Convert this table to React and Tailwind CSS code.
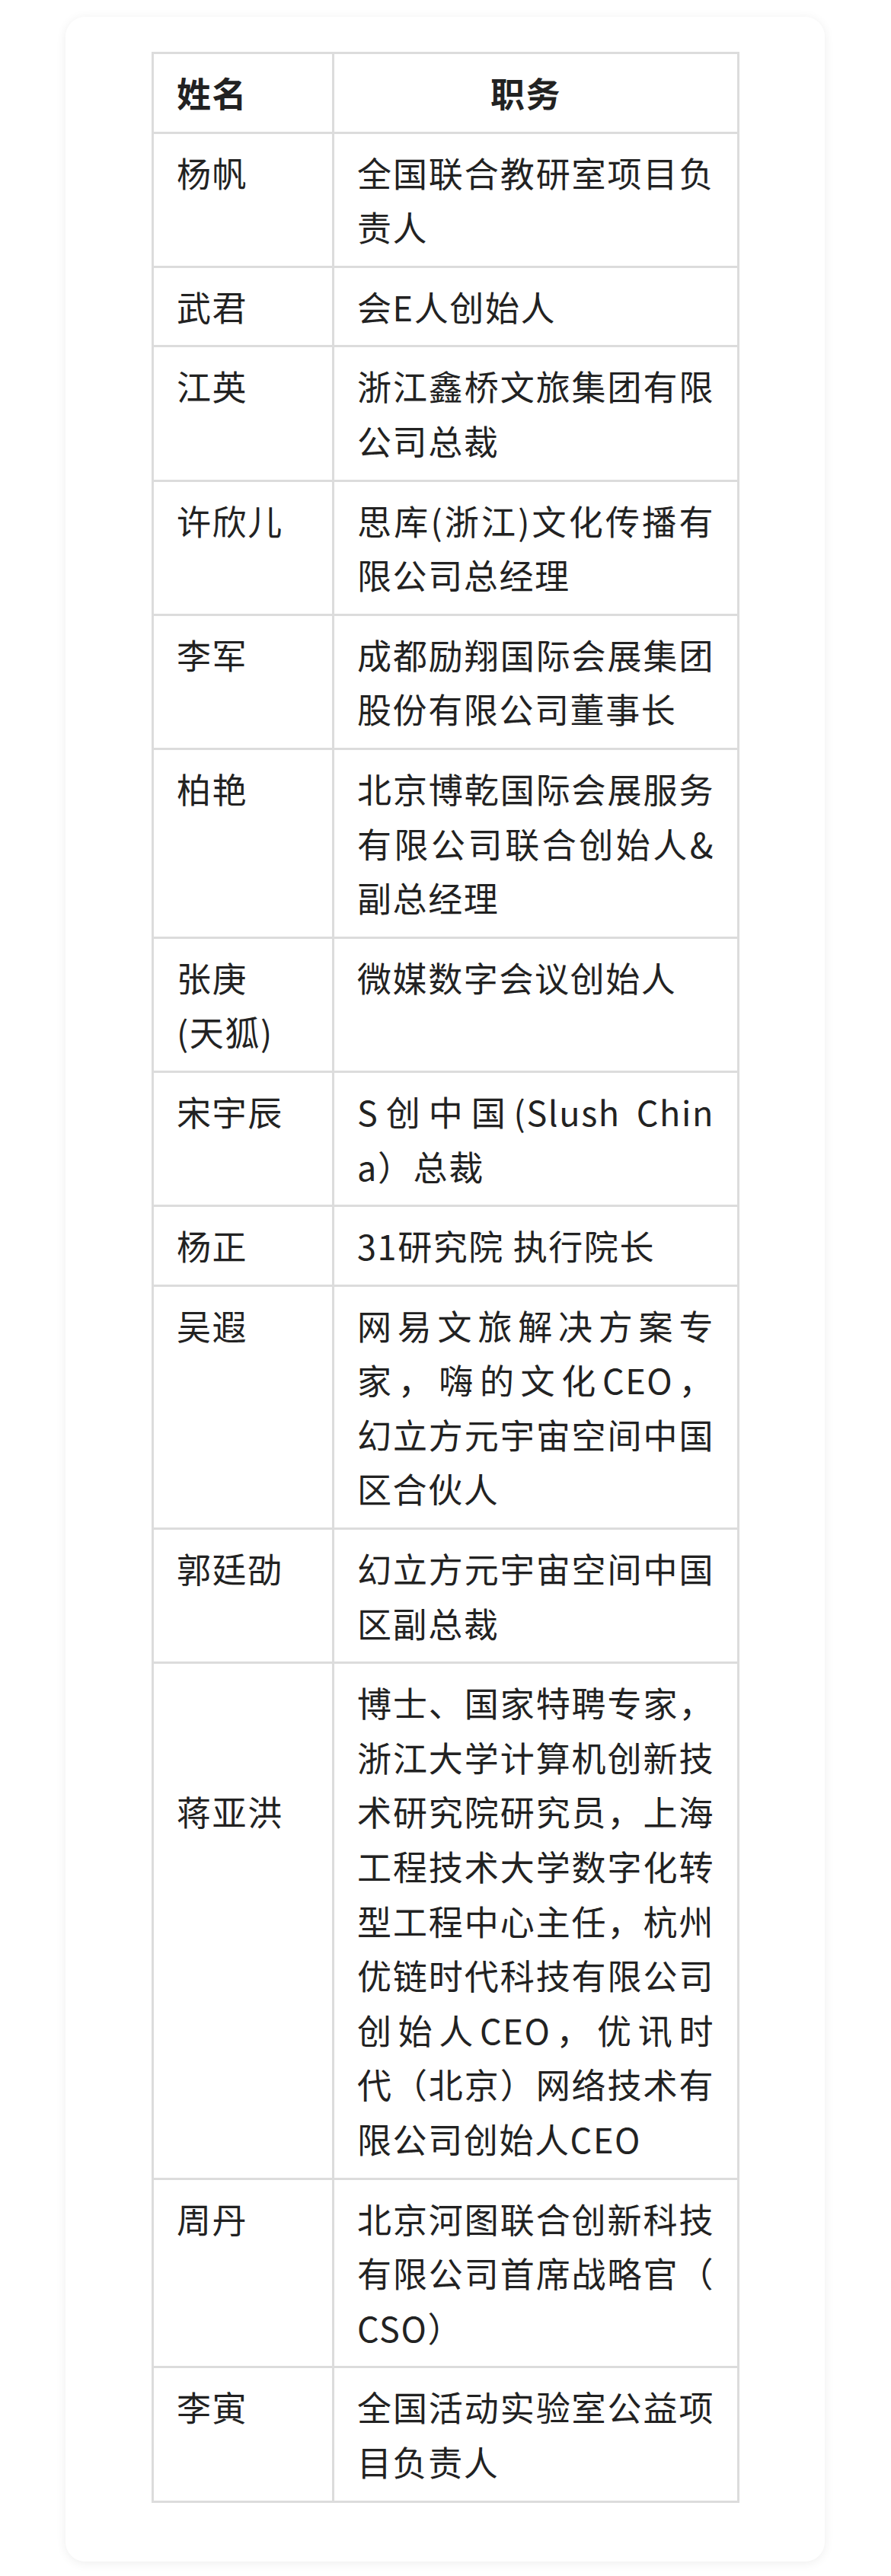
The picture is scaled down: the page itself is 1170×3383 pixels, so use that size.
import React from "react";

const rows = [
  { name: ["杨帆"], lines: ["全国联合教研室项目负", "责人"] },
  { name: ["武君"], lines: ["会E人创始人"] },
  { name: ["江英"], lines: ["浙江鑫桥文旅集团有限", "公司总裁"] },
  { name: ["许欣儿"], lines: ["思库(浙江)文化传播有", "限公司总经理"] },
  { name: ["李军"], lines: ["成都励翔国际会展集团", "股份有限公司董事长"] },
  { name: ["柏艳"], lines: ["北京博乾国际会展服务", "有限公司联合创始人&", "副总经理"] },
  { name: ["张庚", "(天狐)"], lines: ["微媒数字会议创始人"] },
  { name: ["宋宇辰"], lines: ["S创中国(Slush Chin", "a）总裁"] },
  { name: ["杨正"], lines: ["31研究院 执行院长"] },
  {
    name: ["吴遐"],
    lines: ["网易文旅解决方案专", "家，嗨的文化CEO，", "幻立方元宇宙空间中国", "区合伙人"],
  },
  { name: ["郭廷劭"], lines: ["幻立方元宇宙空间中国", "区副总裁"] },
  {
    name: ["蒋亚洪"],
    offset: true,
    lines: [
      "博士、国家特聘专家，",
      "浙江大学计算机创新技",
      "术研究院研究员，上海",
      "工程技术大学数字化转",
      "型工程中心主任，杭州",
      "优链时代科技有限公司",
      "创始人CEO，优讯时",
      "代（北京）网络技术有",
      "限公司创始人CEO",
    ],
  },
  { name: ["周丹"], lines: ["北京河图联合创新科技", "有限公司首席战略官（", "CSO）"] },
  { name: ["李寅"], lines: ["全国活动实验室公益项", "目负责人"] },
];

function Lines({ lines }) {
  return (
    <>
      {lines.map((l, i) =>
        i < lines.length - 1 ? (
          <div key={i} className="text-justify [text-align-last:justify]">
            {l}
          </div>
        ) : (
          <div key={i}>{l}</div>
        )
      )}
    </>
  );
}

export default function App() {
  return (
    <div className="min-h-screen bg-white pt-[22px] pb-[21px] font-['Noto_Sans_CJK_SC','Noto_Sans',sans-serif] text-[#222222]">
      <div className="ml-[86px] w-[997px] rounded-[26px] bg-white pt-[46px] pb-[77px] pl-[113px] pr-[112px] shadow-[0_2px_14px_rgba(0,0,0,0.07)]">
        <div className="border-[3px] border-[#dcdcdc] text-[45px] leading-[71.6px] tracking-[1.6px]">
          <div className="flex">
            <div className="w-[237px] shrink-0 border-r-[3px] border-[#dcdcdc] px-[30px] py-[15px] font-bold">
              姓名
            </div>
            <div className="flex-1 pl-[30px] pr-[56px] py-[15px] text-center font-bold">职务</div>
          </div>
          {rows.map((r, i) => (
            <div key={i} className="flex border-t-[3px] border-[#dcdcdc]">
              <div className="w-[237px] shrink-0 border-r-[3px] border-[#dcdcdc] px-[30px] py-[15px]">
                <div className={r.offset ? "mt-[143.2px]" : ""}>
                  {r.name.map((n, j) => (
                    <div key={j}>{n}</div>
                  ))}
                </div>
              </div>
              <div className="flex-1 px-[30px] py-[15px]">
                <Lines lines={r.lines} />
              </div>
            </div>
          ))}
        </div>
      </div>
    </div>
  );
}
